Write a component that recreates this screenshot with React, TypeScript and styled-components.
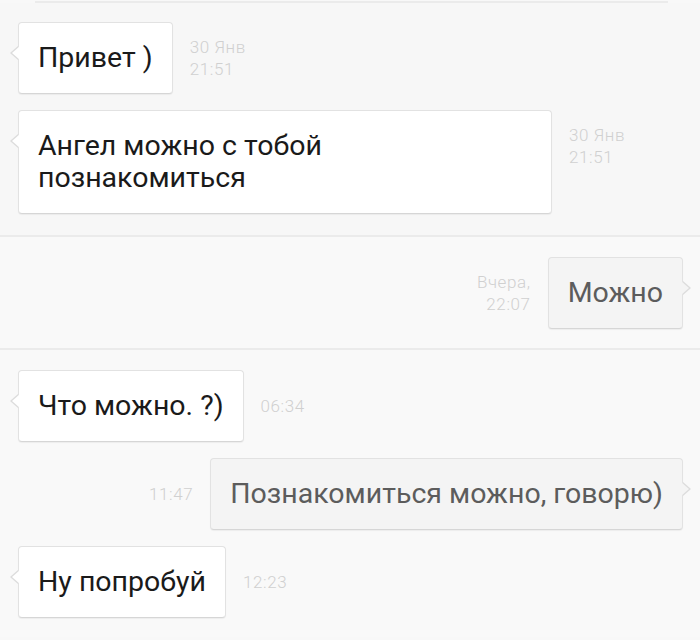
import styled, { createGlobalStyle, css } from 'styled-components';

const GlobalStyle = createGlobalStyle`
    html, body {
        margin: 0;
        padding: 0;
        background: #f8f8f8;
        font-family: Roboto, 'Noto Sans', 'Liberation Sans', sans-serif;
    }
`;

interface Message {
    id: number;
    text: string;
    time: string[];
    out?: boolean;
    width?: number;
}

// messages grouped the way the chat screen splits them
const groups: Message[][] = [
    [
        { id: 1, text: 'Привет )', time: ['30 Янв', '21:51'] },
        { id: 2, text: 'Ангел можно с тобой познакомиться', time: ['30 Янв', '21:51'], width: 534 },
    ],
    [{ id: 3, text: 'Можно', time: ['Вчера,', '22:07'], out: true }],
    [
        { id: 4, text: 'Что можно. ?)', time: ['06:34'] },
        { id: 5, text: 'Познакомиться можно, говорю)', time: ['11:47'], out: true },
        { id: 6, text: 'Ну попробуй', time: ['12:23'] },
    ],
];

export default function App() {
    return (
        <>
            <GlobalStyle />
            <Screen>
                <TopRule />
                {groups.map((group, gi) => (
                    <Section key={gi} $first={gi === 0}>
                        {group.map(m => (
                            <Row key={m.id} $out={m.out}>
                                <Bubble $out={m.out} style={m.width ? { width: m.width } : undefined}>
                                    {m.text}
                                </Bubble>
                                <Meta $out={m.out}>
                                    {m.time.map(t => (
                                        <span key={t}>{t}</span>
                                    ))}
                                </Meta>
                            </Row>
                        ))}
                    </Section>
                ))}
            </Screen>
        </>
    );
}

const Screen = styled.div`
    width: 700px;
    height: 640px;
    overflow: hidden;
    background: #f8f8f8;
`;

const TopRule = styled.div`
    height: 2px;
    margin: 1px 32px 0 35px;
    background: #ebebeb;
    box-shadow: 0 1px 0 #ffffff;
`;

const Section = styled.section<{ $first?: boolean }>`
    display: flex;
    flex-direction: column;
    gap: 16px;
    padding: ${({ $first }) => ($first ? '19px 0 21px' : '20px 0 19px')};
    border-top: ${({ $first }) => ($first ? 'none' : '2px solid #ebebeb')};
    background: ${({ $first }) => ($first ? '#f7f7f7' : '#f9f9f9')};
`;

const Row = styled.div<{ $out?: boolean }>`
    display: flex;
    flex-direction: ${({ $out }) => ($out ? 'row-reverse' : 'row')};
    align-items: flex-start;
    gap: 17px;
    padding: 0 17px 0 18px;
`;

const Bubble = styled.div<{ $out?: boolean }>`
    position: relative;
    box-sizing: border-box;
    padding: 19px 19px;
    border-radius: 4px;
    font-size: 28.5px;
    line-height: 32px;
    background: ${({ $out }) => ($out ? '#f4f4f4' : '#ffffff')};
    color: ${({ $out }) => ($out ? '#5c5c5c' : '#1a1a1a')};
    border: 1px solid #e2e2e2;
    border-bottom-color: #d6d6d6;
    box-shadow: 0 1px 1px rgba(0, 0, 0, 0.05);

    &::before,
    &::after {
        content: '';
        position: absolute;
        top: 23px;
        border-style: solid;
    }

    ${({ $out }) =>
        $out
            ? css`
                  &::before {
                      right: -9px;
                      border-width: 7px 0 7px 8px;
                      border-color: transparent transparent transparent #dcdcdc;
                  }
                  &::after {
                      right: -7px;
                      border-width: 7px 0 7px 8px;
                      border-color: transparent transparent transparent #f4f4f4;
                  }
              `
            : css`
                  &::before {
                      left: -9px;
                      border-width: 7px 8px 7px 0;
                      border-color: transparent #dcdcdc transparent transparent;
                  }
                  &::after {
                      left: -7px;
                      border-width: 7px 8px 7px 0;
                      border-color: transparent #ffffff transparent transparent;
                  }
              `}
`;

const Meta = styled.div<{ $out?: boolean }>`
    height: 72px;
    display: flex;
    flex-direction: column;
    justify-content: center;
    align-items: ${({ $out }) => ($out ? 'flex-end' : 'flex-start')};
    font-size: 17px;
    font-weight: 300;
    letter-spacing: 0.6px;
    line-height: 22px;
    color: #d0d0d0;
`;
